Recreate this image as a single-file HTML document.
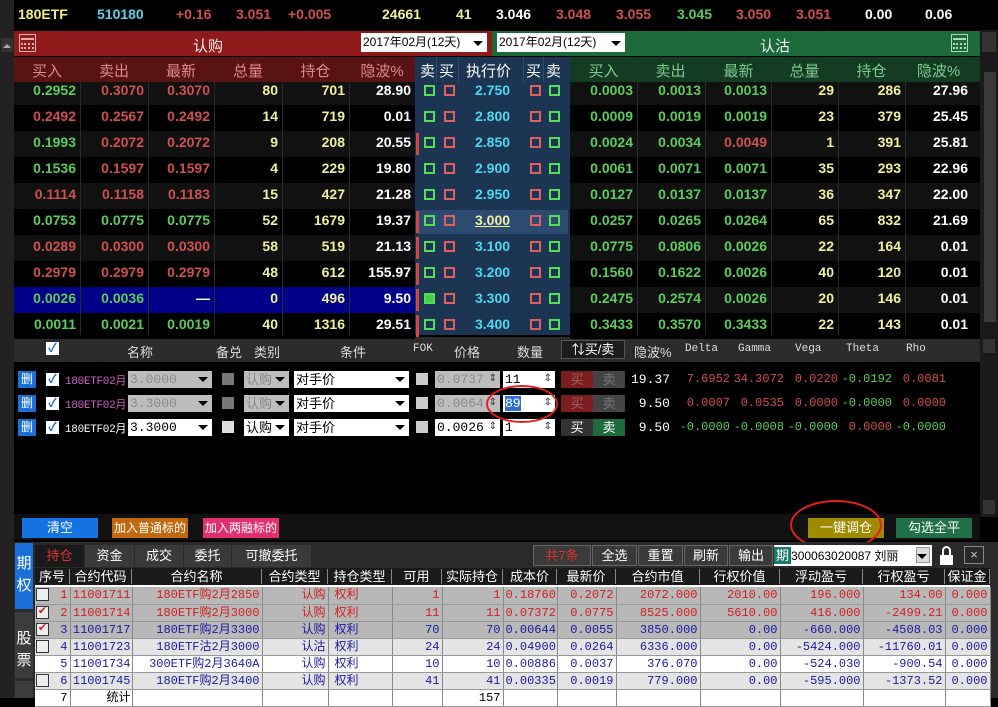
<!DOCTYPE html>
<html><head><meta charset="utf-8">
<style>
*{margin:0;padding:0;box-sizing:border-box}
body{width:998px;height:698px;background:#000;position:relative;overflow:hidden;font-family:"Liberation Sans","Noto Sans CJK SC",sans-serif;font-size:13px;color:#fff}
.a{position:absolute}
.num{font-family:"Liberation Sans",sans-serif;font-weight:bold;font-size:14px}
.g{color:#5ccc5c}.r{color:#d05050}.y{color:#f0f0a0}.w{color:#fff}.c{color:#4dd8f0}
.cell{position:absolute;text-align:right;white-space:nowrap}
.sq{position:absolute;width:11px;height:11px;border:2px solid}
.mono{font-family:"Liberation Mono","Noto Sans CJK SC",monospace}
.bt td{border-right:1px solid #888;border-bottom:1px solid #999;padding:0 2px;height:17px;line-height:16px;white-space:nowrap;overflow:hidden;font-family:"Liberation Mono","Noto Sans CJK SC",monospace;font-size:12px}
.bt tr{height:17px}
.bt{border-collapse:collapse;table-layout:fixed}
.dd{position:absolute;height:17px;background:#fff;color:#000;font-size:13px;line-height:17px;padding-left:2px;white-space:nowrap;overflow:hidden}
.gr{background:#bdbdbd;color:#8a8a8a}
.arr{position:absolute;right:4px;top:6px;border-left:5px solid transparent;border-right:5px solid transparent;border-top:5px solid #000}
.btn{position:absolute;height:20px;text-align:center;line-height:20px;font-size:12px;white-space:nowrap;overflow:hidden}
</style></head><body>
<div class="a" style="left:0;top:0;width:14px;height:698px;background:#222"></div>
<div class="a" style="left:1px;top:38px;width:12px;height:14px;background:#333"></div>
<div class="a" style="left:3px;top:44px;border-left:4px solid transparent;border-right:4px solid transparent;border-bottom:4px solid #aaa"></div>
<div class="a" style="left:980px;top:30px;width:18px;height:310px;background:#1a1a1a"></div>
<div class="a" style="left:982px;top:32px;width:14px;height:20px;background:#333"></div>
<div class="a" style="left:984px;top:72px;width:12px;height:250px;background:#3a3a3a"></div>
<div class="a num" style="left:0;top:0;width:998px;height:30px;font-size:14px">
<span class="a" style="left:18px;top:6px;color:#f0f080">180ETF</span>
<span class="a c" style="left:97px;top:6px;color:#60d0e8">510180</span>
<span class="a r" style="left:176px;top:6px">+0.16</span>
<span class="a r" style="left:236px;top:6px">3.051</span>
<span class="a r" style="left:288px;top:6px">+0.005</span>
<span class="a y" style="left:382px;top:6px">24661</span>
<span class="a y" style="left:456px;top:6px">41</span>
<span class="a w" style="left:496px;top:6px">3.046</span>
<span class="a r" style="left:556px;top:6px">3.048</span>
<span class="a r" style="left:616px;top:6px">3.055</span>
<span class="a g" style="left:677px;top:6px">3.045</span>
<span class="a r" style="left:736px;top:6px">3.050</span>
<span class="a r" style="left:796px;top:6px">3.051</span>
<span class="a w" style="left:865px;top:6px">0.00</span>
<span class="a w" style="left:925px;top:6px">0.06</span>
</div>
<div class="a" style="left:14px;top:31px;width:478px;height:25px;background:#8e1a1a"></div>
<div class="a" style="left:492px;top:31px;width:488px;height:25px;background:#1c6a3a"></div>
<div class="a" style="left:19px;top:34px;width:17px;height:18px;border:1px solid #e0b0b0"></div>
<div class="a" style="left:21px;top:38px;width:13px;height:2px;background:#e0b0b0"></div>
<div class="a" style="left:21px;top:43px;width:13px;height:6px;border-top:2px dotted #e0b0b0;border-bottom:2px dotted #e0b0b0"></div>
<div class="a" style="left:951px;top:34px;width:17px;height:18px;border:1px solid #b0d8b8"></div>
<div class="a" style="left:953px;top:38px;width:13px;height:2px;background:#b0d8b8"></div>
<div class="a" style="left:953px;top:43px;width:13px;height:6px;border-top:2px dotted #b0d8b8;border-bottom:2px dotted #b0d8b8"></div>
<div class="a" style="left:193px;top:35px;font-size:15px;color:#eee">认购</div>
<div class="a" style="left:760px;top:35px;font-size:15px;color:#eee">认沽</div>
<div class="dd" style="left:361px;top:33px;width:126px;height:19px;font-size:12px;line-height:19px">2017年02月(12天)<div class="arr" style="top:8px"></div></div>
<div class="dd" style="left:497px;top:33px;width:128px;height:19px;font-size:12px;line-height:19px">2017年02月(12天)<div class="arr" style="top:8px"></div></div>
<div class="a" style="left:14px;top:57px;width:401px;height:25px;background:#5a1313"></div>
<div class="a" style="left:415px;top:57px;width:155px;height:25px;background:#1c3553"></div>
<div class="a" style="left:570px;top:57px;width:410px;height:25px;background:#133c22"></div>
<div class="a" style="left:415px;top:82px;width:155px;height:253px;background:#1c3553"></div>
<div class="a" style="left:14px;top:337px;width:966px;height:25px;background:#2c2c2c"></div>
<div class="a" style="left:980px;top:337px;width:18px;height:180px;background:#1a1a1a"></div>
<div class="a" style="left:983px;top:339px;width:12px;height:14px;background:#333"></div>
<div class="a" style="left:983px;top:500px;width:12px;height:14px;background:#333"></div>
<div class="a" style="left:14px;top:514px;width:966px;height:26px;background:#111"></div>
<div class="btn" style="left:22px;top:518px;width:76px;background:#1473e0;font-size:13px">清空</div>
<div class="btn" style="left:112px;top:518px;width:76px;background:#c06a10">加入普通标的</div>
<div class="btn" style="left:203px;top:518px;width:76px;background:#e0306e">加入两融标的</div>
<div class="btn" style="left:808px;top:518px;width:76px;background:#a08a00;font-size:13px">一键调仓</div>
<div class="btn" style="left:896px;top:518px;width:76px;background:#22704a;font-size:13px">勾选全平</div>
<div class="a" style="left:790px;top:500px;width:92px;height:50px;border:2px solid #e02020;border-radius:50%"></div>
<div class="a" style="left:14px;top:542px;width:984px;height:156px;background:#2a2a2a"></div>
<div class="a" style="left:15px;top:543px;width:18px;height:66px;background:#1a6fd8;color:#fff;font-size:15px;line-height:22px;text-align:center;padding-top:10px">期<br>权</div>
<div class="a" style="left:15px;top:612px;width:18px;height:66px;background:#3c3c3c;color:#fff;font-size:15px;line-height:22px;text-align:center;padding-top:16px">股<br>票</div>
<div class="a" style="left:15px;top:681px;width:18px;height:17px;background:#3c3c3c"></div>
<div class="a" style="left:35px;top:568px;width:955px;height:18px;background:#1a1a1a"></div>
<div class="a" style="left:35px;top:585px;width:955px;height:2px;background:#fff"></div>
<div id="bt" class="a" style="left:35px;top:587px"></div>
<script>
function E(h){document.body.insertAdjacentHTML('beforeend',h)}
var lh=['买入','卖出','最新','总量','持仓','隐波%'],lx=[14,80,148,214,282,349],lw=[66,68,66,68,67,66];
lh.forEach(function(t,i){E('<div class="a" style="left:'+lx[i]+'px;top:60px;width:'+lw[i]+'px;text-align:center;font-size:15px;color:#e08a8a">'+t+'</div>')});
var rx=[570,637,705,771,838,905];
lh.forEach(function(t,i){E('<div class="a" style="left:'+rx[i]+'px;top:60px;width:67px;text-align:center;font-size:15px;color:#7ecc8e">'+t+'</div>')});
[['卖',420],['买',439],['执行价',466],['买',526],['卖',546]].forEach(function(a){E('<div class="a" style="left:'+a[1]+'px;top:60px;font-size:15px;color:#fff">'+a[0]+'</div>')});
[436,458,523,543].forEach(function(x){E('<div class="a" style="left:'+x+'px;top:57px;width:1px;height:25px;background:#2e5070"></div>')});
var D=[
['0.2952g','0.3070r','0.3070r','80','701','28.90','2.750','0.0003g','0.0013g','0.0013g','29','286','27.96'],
['0.2492r','0.2567r','0.2492r','14','719','0.01','2.800','0.0009g','0.0019g','0.0019g','23','379','25.45'],
['0.1993g','0.2072r','0.2072r','9','208','20.55','2.850','0.0024g','0.0034g','0.0049r','1','391','25.81'],
['0.1536g','0.1597r','0.1597r','4','229','19.80','2.900','0.0061g','0.0071g','0.0071g','35','293','22.96'],
['0.1114r','0.1158r','0.1183r','15','427','21.28','2.950','0.0127g','0.0137g','0.0137g','36','347','22.00'],
['0.0753g','0.0775g','0.0775g','52','1679','19.37','3.000','0.0257g','0.0265g','0.0264g','65','832','21.69'],
['0.0289r','0.0300r','0.0300r','58','519','21.13','3.100','0.0775g','0.0806g','0.0026g','22','164','0.01'],
['0.2979r','0.2979r','0.2979r','48','612','155.97','3.200','0.1560g','0.1622g','0.0026g','40','120','0.01'],
['0.0026g','0.0036g','—w','0','496','9.50','3.300','0.2475g','0.2574g','0.0026g','20','146','0.01'],
['0.0011g','0.0021g','0.0019g','40','1316','29.51','3.400','0.3433g','0.3570g','0.3433g','22','143','0.01']];
var lR=[80,148,214,282,349,415],rR=[637,705,771,838,905,972];
D.forEach(function(r,i){var y=79+i*26,bg=i%2?'#000':'#111';if(i==0)y=82;var hh=i==0?23:26;
 E('<div class="a" style="left:14px;top:'+y+'px;width:401px;height:'+hh+'px;background:'+(i==8?'#000088':bg)+'"></div>');
 E('<div class="a" style="left:570px;top:'+y+'px;width:410px;height:'+hh+'px;background:'+bg+'"></div>');
 y=77+i*26;
 if(i==5)E('<div class="a" style="left:417px;top:'+(y+3)+'px;width:151px;height:24px;background:#2c4b70"></div>');
 for(var j=0;j<6;j++){var v=r[j],cl=j<3?v.slice(-1):(j<5?'y':'w');if(j<3)v=v.slice(0,-1);
  E('<div class="cell num '+cl+'" style="left:'+(lR[j]-70)+'px;width:66px;top:'+(y+5)+'px">'+v+'</div>');
  v=r[7+j];cl=j<3?v.slice(-1):(j<5?'y':'w');if(j<3)v=v.slice(0,-1);
  E('<div class="cell num '+cl+'" style="left:'+(rR[j]-70)+'px;width:66px;top:'+(y+5)+'px">'+v+'</div>');}
 E('<div class="a num c" style="left:475px;top:'+(y+5)+'px;'+(i==5?'color:#f0f0a0;text-decoration:underline':'')+'">'+r[6]+'</div>');
 E('<div class="sq" style="left:424px;top:'+(y+8)+'px;border-color:#55dd55;'+(i==8?'background:#44cc44':'')+'"></div>');
 E('<div class="sq" style="left:444px;top:'+(y+8)+'px;border-color:#e06060"></div>');
 E('<div class="sq" style="left:530px;top:'+(y+8)+'px;border-color:#e06060"></div>');
 E('<div class="sq" style="left:549px;top:'+(y+8)+'px;border-color:#55dd55"></div>');
 if(i>=2&&i!=3&&i!=4)E('<div class="a" style="left:416px;top:'+(y+4)+'px;width:3px;height:22px;background:#d04848"></div>');
});
[80,148,214,282,349,637,705,771,838,905].forEach(function(x){E('<div class="a" style="left:'+x+'px;top:82px;width:1px;height:253px;background:#2a2a2a"></div>')});
E('<div class="a" style="left:46px;top:342px;width:13px;height:13px;background:#fff;color:#1a6fd8;font-size:12px;line-height:13px;text-align:center;font-weight:bold">✓</div>');
[['名称',127],['备兑',216],['类别',254],['条件',340],['价格',454],['数量',517],['隐波%',634]].forEach(function(a){E('<div class="a" style="left:'+a[1]+'px;top:342px;font-size:13px;color:#ddd">'+a[0]+'</div>')});
[['FOK',413],['Delta',685],['Gamma',738],['Vega',795],['Theta',846],['Rho',906]].forEach(function(a){E('<div class="a mono" style="left:'+a[1]+'px;top:343px;font-size:11px;color:#ddd">'+a[0]+'</div>')});
E('<div class="a" style="left:561px;top:340px;width:64px;height:19px;border:1px solid #555;background:#1c1c1c;text-align:center;font-size:13px;line-height:17px;color:#fff">⇅买/卖</div>');
var O=[[371,'#d060c0',1,'3.0000','0.0737','11',['#7a1e1e','#444'],'19.37',['7.6952r','34.3072r','0.0220r','-0.0192g','0.0081r']],
[395,'#d060c0',1,'3.3000','0.0064','89',['#7a1e1e','#444'],'9.50',['0.0007r','0.0535r','0.0000r','-0.0000g','0.0000r']],
[419,'#fff',0,'3.3000','0.0026','1',['#333','#1e6a3a'],'9.50',['-0.0000g','-0.0008g','-0.0000g','0.0000r','-0.0000g']]];
O.forEach(function(o){var y=o[0],g=o[2];
 E('<div class="a" style="left:18px;top:'+y+'px;width:18px;height:17px;background:#1a6fd8;font-size:12px;text-align:center;line-height:17px">删</div>');
 E('<div class="a" style="left:46px;top:'+(y+2)+'px;width:13px;height:13px;background:#fff;color:#1a6fd8;font-size:12px;line-height:13px;text-align:center;font-weight:bold">✓</div>');
 E('<div class="a" style="left:65px;top:'+(y+1)+'px;font-size:11px;letter-spacing:-0.3px;font-family:Liberation Mono,Noto Sans CJK SC,monospace;color:'+o[1]+';white-space:nowrap">180ETF02月</div>');
 E('<div class="dd mono '+(g?'gr':'')+'" style="left:128px;top:'+y+'px;width:84px">'+o[3]+'<div class="arr"></div></div>');
 E('<div class="a" style="left:222px;top:'+(y+2)+'px;width:12px;height:12px;background:'+(g?'#777':'#ddd')+'"></div>');
 E('<div class="dd '+(g?'gr':'')+'" style="left:244px;top:'+y+'px;width:45px">认购<div class="arr"></div></div>');
 E('<div class="dd" style="left:294px;top:'+y+'px;width:115px">对手价<div class="arr"></div></div>');
 E('<div class="a" style="left:416px;top:'+(y+2)+'px;width:12px;height:12px;background:#ccc"></div>');
 E('<div class="dd mono '+(g?'gr':'')+'" style="left:435px;top:'+y+'px;width:65px">'+o[4]+'<span class="a" style="right:3px;top:0;font-size:10px;color:#333">⇕</span></div>');
 E('<div class="dd mono" style="left:503px;top:'+y+'px;width:52px">'+(o[5]=='89'?'<span style="background:#3070d0;color:#fff">89</span>':o[5])+'<span class="a" style="right:3px;top:0;font-size:10px;color:#333">⇕</span></div>');
 E('<div class="a" style="left:561px;top:'+y+'px;width:32px;height:17px;background:'+o[6][0]+';text-align:center;line-height:17px;color:'+(g?'#a06060':'#fff')+'">买</div>');
 E('<div class="a" style="left:593px;top:'+y+'px;width:32px;height:17px;background:'+o[6][1]+';text-align:center;line-height:17px;color:'+(g?'#777':'#fff')+'">卖</div>');
 E('<div class="cell mono" style="left:620px;width:50px;top:'+(y+1)+'px;color:#fff">'+o[7]+'</div>');
 o[8].forEach(function(v,k){var cl=v.slice(-1);E('<div class="cell mono '+cl+'" style="left:'+(678+k*54)+'px;width:52px;top:'+(y+1)+'px;font-size:12px">'+v.slice(0,-1)+'</div>')});
});
E('<div class="a" style="left:486px;top:385px;width:72px;height:38px;border:2px solid #e02020;border-radius:50%"></div>');
[['持仓',35,50,'#1a1a1a','#e03030'],['资金',85,50,'#3a3a3a','#fff'],['成交',135,49,'#3a3a3a','#fff'],['委托',184,48,'#3a3a3a','#fff'],['可撤委托',232,80,'#3a3a3a','#fff']].forEach(function(t){E('<div class="a" style="left:'+t[1]+'px;top:545px;width:'+(t[2]-1)+'px;height:22px;background:'+t[3]+';color:'+t[4]+';text-align:center;line-height:22px;font-size:13px">'+t[0]+'</div>')});
[['共7条',533,58,'#e03030'],['全选',592,45,'#fff'],['重置',638,45,'#fff'],['刷新',684,44,'#fff'],['输出',729,44,'#fff']].forEach(function(t){E('<div class="a" style="left:'+t[1]+'px;top:545px;width:'+t[2]+'px;height:21px;background:#3a3a3a;border:1px solid #666;color:'+t[3]+';text-align:center;line-height:19px;font-size:13px">'+t[0]+'</div>')});
E('<div class="a" style="left:774px;top:545px;width:158px;height:21px;background:#fff;color:#000;font-size:12px;line-height:21px;white-space:nowrap"><span style="background:#1a7a6a;color:#fff;padding:1px 2px;font-size:13px">期</span>300063020087 刘丽<span class="a" style="right:2px;top:2px;width:14px;height:16px;background:#ddd;border:1px solid #999"></span><span class="arr" style="right:5px;top:9px"></span></div>');
E('<div class="a" style="left:940px;top:555px;width:13px;height:10px;background:#fff"></div><div class="a" style="left:942px;top:546px;width:9px;height:11px;border:2px solid #fff;border-radius:5px 5px 0 0"></div>');
E('<div class="a" style="left:964px;top:546px;width:20px;height:18px;border:1px solid #888;color:#ccc;text-align:center;line-height:16px;font-size:13px">×</div>');
var W=[35,62,130,66,64,50,61,54,59,84,80,83,82,45],H=['序号','合约代码','合约名称','合约类型','持仓类型','可用','实际持仓','成本价','最新价','合约市值','行权价值','浮动盈亏','行权盈亏','保证金'];
var x=35;H.forEach(function(h,i){E('<div class="a" style="left:'+x+'px;top:569px;width:'+W[i]+'px;text-align:center;font-size:13px;color:#fff;border-right:1px solid #888;height:15px;line-height:15px;white-space:nowrap;overflow:hidden">'+h+'</div>');x+=W[i]});
var R=[
['#b8b8b8','#d02020',0,'1','11001711','180ETF购2月2850','认购','权利','1','1','0.18760','0.2072','2072.000','2010.00','196.000','134.00','0.000'],
['#b8b8b8','#d02020',1,'2','11001714','180ETF购2月3000','认购','权利','11','11','0.07372','0.0775','8525.000','5610.00','416.000','-2499.21','0.000'],
['#b8b8b8','#1a1aa0',1,'3','11001717','180ETF购2月3300','认购','权利','70','70','0.00644','0.0055','3850.000','0.00','-660.000','-4508.03','0.000'],
['#e4e4e4','#1a1aa0',0,'4','11001723','180ETF沽2月3000','认沽','权利','24','24','0.04900','0.0264','6336.000','0.00','-5424.000','-11760.01','0.000'],
['#ffffff','#1a1aa0',2,'5','11001734','300ETF购2月3640A','认购','权利','10','10','0.00886','0.0037','376.070','0.00','-524.030','-900.54','0.000'],
['#e4e4e4','#1a1aa0',0,'6','11001745','180ETF购2月3400','认购','权利','41','41','0.00335','0.0019','779.000','0.00','-595.000','-1373.52','0.000'],
['#ffffff','#000',2,'7','统计','','','','','157','','','','','','','']];
var h='<table class="bt" style="width:955px"><colgroup>'+W.map(function(w){return '<col style="width:'+w+'px">'}).join('')+'</colgroup>';
R.forEach(function(r,ri){h+='<tr style="background:'+r[0]+';color:'+r[1]+'">';
 var cb=r[2]==2?'':'<span style="display:inline-block;width:13px;height:13px;border:1px solid #333;background:#eee;float:left;margin-top:1px;color:#d02020;font-size:11px;line-height:11px;text-align:center">'+(r[2]?'✔':'')+'</span>';
 h+='<td style="text-align:right;padding:0 2px 0 1px">'+cb+r[3]+'</td>';
 for(var k=4;k<17;k++){var al=(k==7)?'left':'right';h+='<td style="text-align:'+al+';'+(k==4?'padding:0 1px;':'')+(k==7?'padding-left:6px;':'')+'">'+r[k]+'</td>'}
 h+='</tr>'});
document.getElementById('bt').innerHTML=h+'</table>';
</script>
</body></html>
